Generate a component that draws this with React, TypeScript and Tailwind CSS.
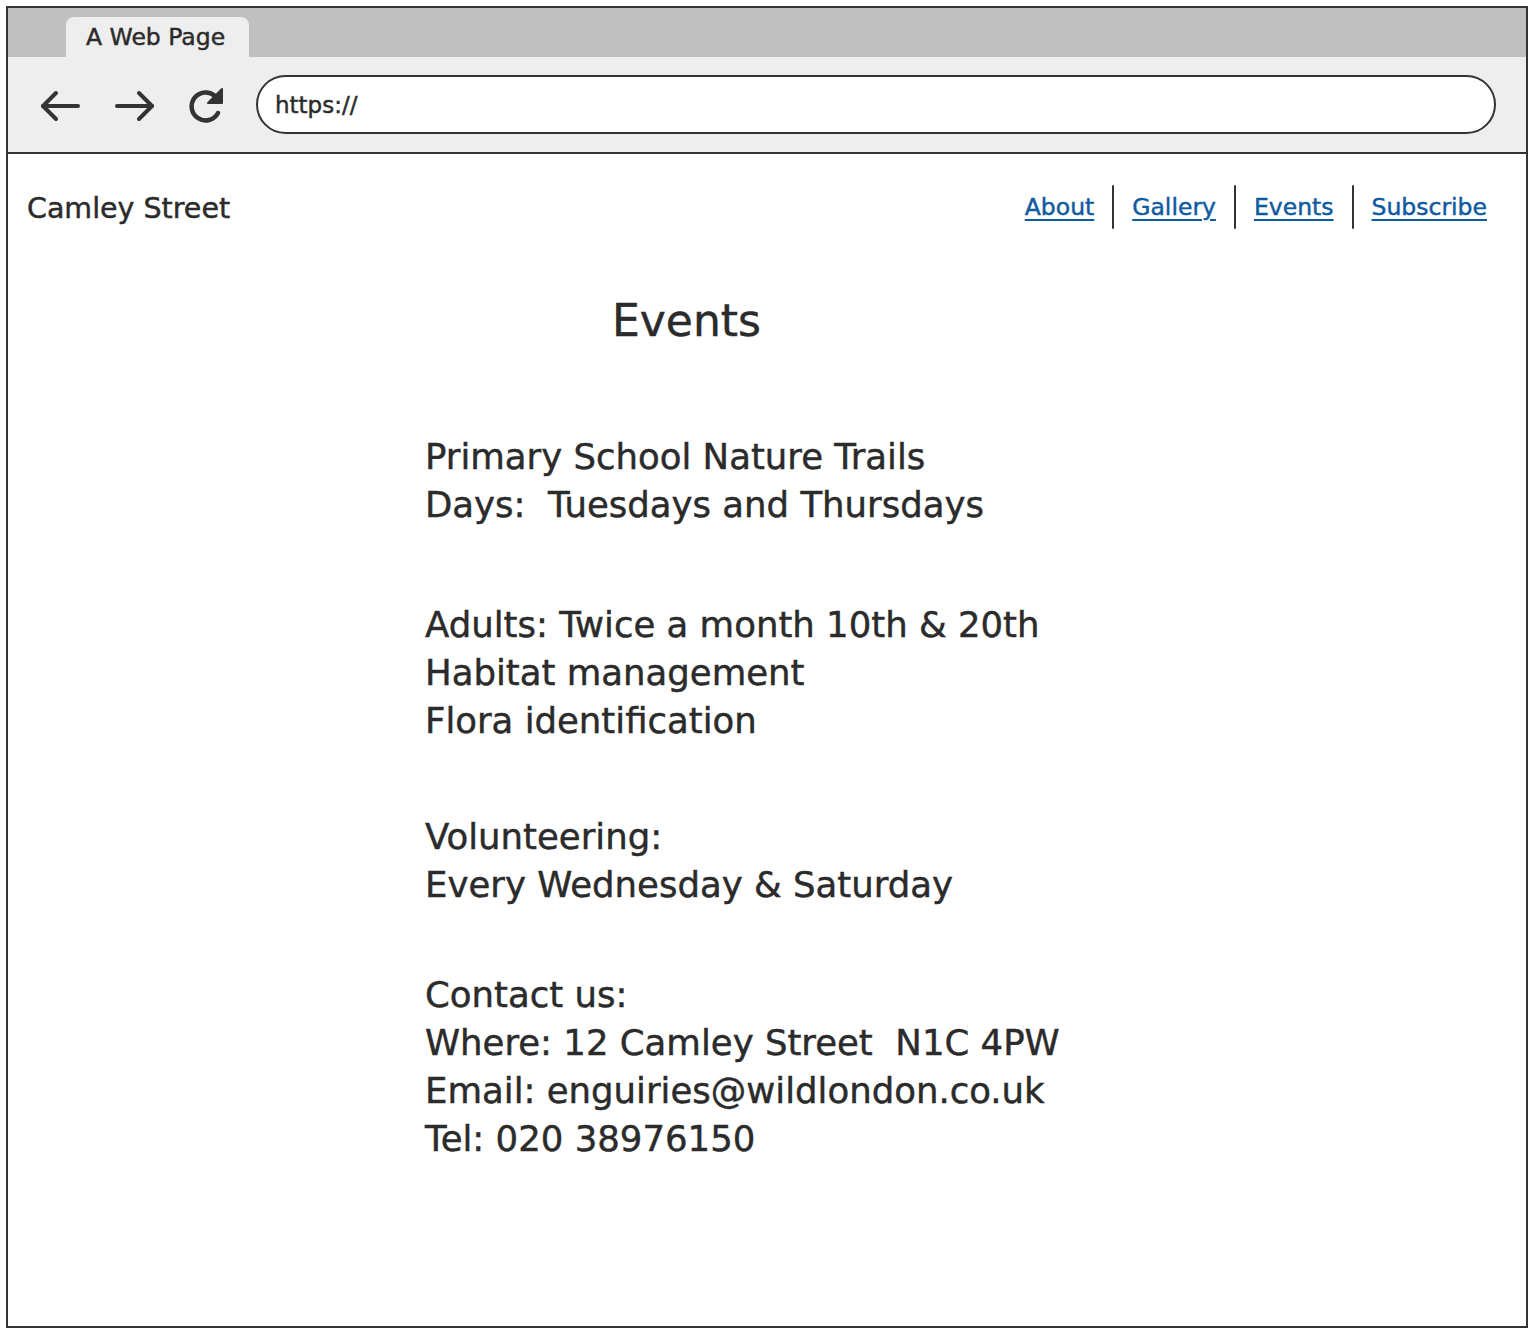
import React from "react";

const font = { fontFamily: "'DejaVu Sans', 'Open Sans', sans-serif" };

function ArrowLeft() {
  return (
    <svg width="44" height="36" viewBox="0 0 44 36" fill="none" stroke="#333" strokeWidth="4" strokeLinecap="round" strokeLinejoin="round">
      <path d="M40 18 H5" />
      <path d="M18 5 L5 18 L18 31" />
    </svg>
  );
}
function ArrowRight() {
  return (
    <svg width="44" height="36" viewBox="0 0 44 36" fill="none" stroke="#333" strokeWidth="4" strokeLinecap="round" strokeLinejoin="round">
      <path d="M4 18 H39" />
      <path d="M26 5 L39 18 L26 31" />
    </svg>
  );
}
function Reload() {
  return (
    <svg width="40" height="40" viewBox="0 0 40 40" fill="none">
      <path d="M30 10 A14 14 0 1 0 33 27" stroke="#333" strokeWidth="4.5" strokeLinecap="round" fill="none" />
      <path d="M37 3 L37 17 L23 17 Z" fill="#333" stroke="#333" strokeWidth="2" strokeLinejoin="round" />
    </svg>
  );
}

function Sep() {
  return <div className="w-[2px] h-[44px] bg-[#333] rounded-full" />;
}

export default function App() {
  return (
    <div className="w-[1534px] h-[1334px] bg-white pt-[6px] pl-[6px]" style={font}>
      <div className="w-[1522px] h-[1322px] border-2 border-[#333] flex flex-col text-[#2b2b2b] [-webkit-text-stroke-width:0.45px]">
        {/* tab bar */}
        <div className="h-[49px] bg-[#c0c0c0] flex items-end pl-[58px]">
          <div className="w-[183px] h-[40px] bg-[#eeeeee] rounded-t-[8px] flex items-center pl-[20px] text-[23.5px] pt-[1px]">
            A Web Page
          </div>
        </div>
        {/* toolbar */}
        <div className="h-[97px] bg-[#eeeeee] border-b-2 border-[#333] flex items-center">
          <div className="flex items-center pl-[30px] pt-[2px]">
            <ArrowLeft />
            <div className="w-[31px]" />
            <ArrowRight />
            <div className="w-[28px]" />
            <Reload />
          </div>
          <div className="ml-[31px] w-[1240px] h-[59px] bg-white border-2 border-[#333] rounded-full flex items-center pl-[17px] text-[23px] pt-[2px]">
            https://
          </div>
        </div>
        {/* content */}
        <div className="flex-1 bg-white">
          <div className="flex items-center justify-between pl-[19px] pr-[39px] pt-[30px]">
            <div className="text-[28.5px] mt-[4px]">Camley Street</div>
            <div className="flex items-center gap-[18px] text-[23.5px] text-[#0f5aa0]">
              <a className="underline underline-offset-[4px] decoration-[1.5px]">About</a>
              <Sep />
              <a className="underline underline-offset-[4px] decoration-[1.5px]">Gallery</a>
              <Sep />
              <a className="underline underline-offset-[4px] decoration-[1.5px]">Events</a>
              <Sep />
              <a className="underline underline-offset-[4px] decoration-[1.5px]">Subscribe</a>
            </div>
          </div>
          <div className="pl-[417px] pt-[62px]">
            <div className="pl-[187px] text-[44px] leading-[56px]">Events</div>
            <div className="text-[35.5px] leading-[48px] mt-[84px]">
              <div>Primary School Nature Trails</div>
              <div>Days:&nbsp; Tuesdays and Thursdays</div>
              <div className="mt-[72px]">Adults: Twice a month 10th &amp; 20th</div>
              <div>Habitat management</div>
              <div>Flora identification</div>
              <div className="mt-[68px]">Volunteering:</div>
              <div>Every Wednesday &amp; Saturday</div>
              <div className="mt-[62px]">Contact us:</div>
              <div>Where: 12 Camley Street&nbsp; N1C 4PW</div>
              <div>Email: enguiries@wildlondon.co.uk</div>
              <div>Tel: 020 38976150</div>
            </div>
          </div>
        </div>
      </div>
    </div>
  );
}
